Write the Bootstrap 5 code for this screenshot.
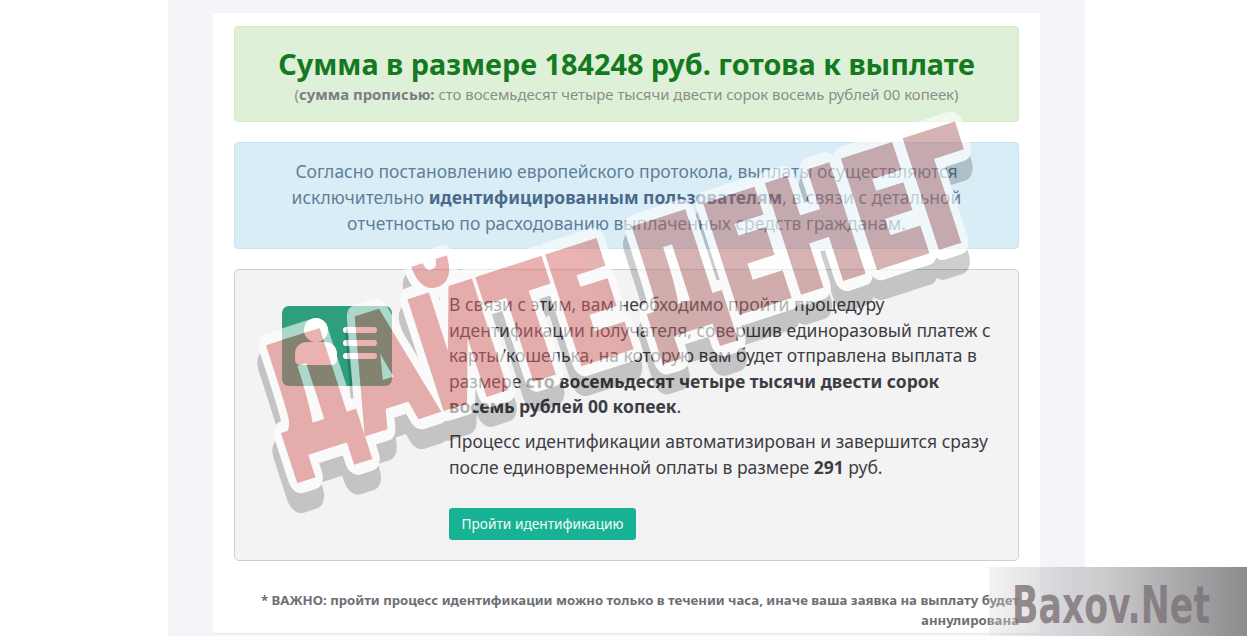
<!DOCTYPE html>
<html lang="ru">
<head>
  <meta charset="UTF-8">
  <title>Идентификация</title>
  <link href="https://cdn.jsdelivr.net/npm/bootstrap@5.3.3/dist/css/bootstrap.min.css" rel="stylesheet">
  <style>
    html, body { height: 636px; overflow: hidden; }
    body { background: #fff; font-family: "Noto Sans", "Open Sans", sans-serif; color: #3d3d45; position: relative; }
    .page-panel { width: 917px; height: 636px; margin-left: 168px; background: #f3f5f9; padding: 12px 45px 0; }
    .page-inner { background: #fff; height: 622px; padding: 13px 21px 0; border-top: 1px solid #eef0f3; border-bottom: 1px solid #e8e8e8; overflow: hidden; }
    .sum-box { background: #dff0d8; border: 1px solid #d6e9c6; border-radius: 4px; height: 96px; padding: 19px 10px 0; margin-bottom: 20px; color: #8c8c8c; }
    .sum-title { font-size: 28.8px; line-height: 36px; font-weight: 700; color: #137a1f; margin: 0 0 2px; }
    .sum-words { font-size: 14.9px; line-height: 20px; }
    .sum-words b { color: #7d7d80; }
    .info-box { background: #d9edf7; border: 1px solid #c4e6f3; border-radius: 4px; height: 107px; padding: 15px 40px 0; margin-bottom: 20px; color: #5f7f99; font-size: 17.5px; line-height: 26px; }
    .info-box b { color: #4a6a8c; }
    .ident-box { background: #f3f3f3; border: 1px solid #cfcfcf; border-radius: 5px; height: 292px; padding: 22px 15px 0 47px; font-size: 17.5px; line-height: 25.5px; }
    .ident-icon { width: 110px; height: 80px; margin-top: 14px; }
    .ident-text { margin-left: 57px; }
    .ident-text p { margin: 0 0 9.5px; }
    .ident-btn { background: #18b394; border: 0; color: #f2fbf8; font-size: 13.7px; line-height: 32px; height: 32px; width: 187px; padding: 0; border-radius: 3px; margin-top: 18px; }
    .note-text { color: #6e6e74; font-size: 13.2px; line-height: 20px; font-weight: 700; text-align: right; margin-top: 29px; }
    .stamp { position: absolute; left: 0; top: 0; pointer-events: none; }
    .stamp-word { font-family: "Liberation Sans Narrow", "DejaVu Sans Condensed", sans-serif; font-weight: 700; font-size: 150px; word-spacing: -24px; }
    .water-mark { position: absolute; right: 0; bottom: 0; width: 258px; height: 69px; background: linear-gradient(90deg, rgba(215,215,215,.3), rgba(190,190,193,.8) 45%, #8b8b8e 100%); }
    .water-word { font-family: "Liberation Sans Narrow", "DejaVu Sans Condensed", sans-serif; font-weight: 700; font-size: 52px; fill: #7b7076; fill-opacity: .8; }
  </style>
</head>
<body>

  <div class="page-panel">
    <div class="page-inner">

      <div class="sum-box text-center">
        <h1 class="sum-title">Сумма в размере 184248 руб. готова к выплате</h1>
        <div class="sum-words">(<b>сумма прописью:</b> сто восемьдесят четыре тысячи двести сорок восемь рублей 00 копеек)</div>
      </div>

      <div class="info-box text-center">
        Согласно постановлению европейского протокола, выплаты осуществляются исключительно <b>идентифицированным пользователям</b>, в связи с детальной отчетностью по расходованию выплаченных средств гражданам.
      </div>

      <div class="ident-box d-flex">
        <svg class="ident-icon flex-shrink-0" viewBox="0 0 110 80">
          <rect width="110" height="80" rx="7" fill="#2e9e7c"/>
          <circle cx="34" cy="24" r="12" fill="#fff"/>
          <path d="M13 48c0-8 6-12 12-12h18c6 0 12 4 12 12v5c0 4-2 6-6 6H19c-4 0-6-2-6-6z" fill="#fff"/>
          <rect x="61" y="21" width="34" height="6" rx="3" fill="#fff"/>
          <rect x="61" y="34" width="34" height="6" rx="3" fill="#fff"/>
          <rect x="61" y="47" width="34" height="6" rx="3" fill="#fff"/>
        </svg>
        <div class="ident-text">
          <p>В связи с этим, вам необходимо пройти процедуру идентификации получателя, совершив единоразовый платеж с карты/кошелька, на которую вам будет отправлена выплата в размере <b>сто восемьдесят четыре тысячи двести сорок<br>восемь рублей 00 копеек</b>.</p>
          <p>Процесс идентификации автоматизирован и завершится сразу после единовременной оплаты в размере <b>291</b> руб.</p>
          <button class="btn ident-btn" type="button">Пройти идентификацию</button>
        </div>
      </div>

      <div class="note-text">* ВАЖНО: пройти процесс идентификации можно только в течении часа, иначе ваша заявка на выплату будет аннулирована</div>

    </div>
  </div>

  <!-- штамп поверх страницы -->
  <svg class="stamp" width="1247" height="636" viewBox="0 0 1247 636">
    <defs>
      <linearGradient id="stampRed" gradientUnits="userSpaceOnUse" x1="340" y1="0" x2="400" y2="0">
        <stop offset="0" stop-color="#d96868"/>
        <stop offset="1" stop-color="#b06868"/>
      </linearGradient>
      <text id="stampWord" class="stamp-word" transform="translate(286 458) rotate(-18)" textLength="740" lengthAdjust="spacingAndGlyphs">ДАЙТЕ ДЕНЕГ</text>
      <mask id="outsideBand" maskUnits="userSpaceOnUse" x="0" y="0" width="1247" height="636">
        <rect width="1247" height="636" fill="#fff"/>
        <use href="#stampWord" fill="#000" stroke="#000" stroke-width="30" stroke-linejoin="round"/>
      </mask>
      <mask id="outsideWord" maskUnits="userSpaceOnUse" x="0" y="0" width="1247" height="636">
        <rect width="1247" height="636" fill="#fff"/>
        <use href="#stampWord" fill="#000" stroke="#000" stroke-width="8"/>
      </mask>
    </defs>
    <g mask="url(#outsideBand)" opacity=".19">
      <use href="#stampWord" transform="translate(0 18)" fill="#000" stroke="#000" stroke-width="34" stroke-linejoin="round"/>
    </g>
    <g mask="url(#outsideWord)" opacity=".6">
      <use href="#stampWord" fill="#fff" stroke="#fff" stroke-width="30" stroke-linejoin="round"/>
    </g>
    <g opacity=".5">
      <use href="#stampWord" fill="url(#stampRed)" stroke="url(#stampRed)" stroke-width="8"/>
    </g>
  </svg>

  <div class="water-mark">
    <svg width="258" height="69" viewBox="0 0 258 69">
      <text class="water-word" x="23" y="56" textLength="198" lengthAdjust="spacingAndGlyphs">Baxov.Net</text>
    </svg>
  </div>

</body>
</html>
